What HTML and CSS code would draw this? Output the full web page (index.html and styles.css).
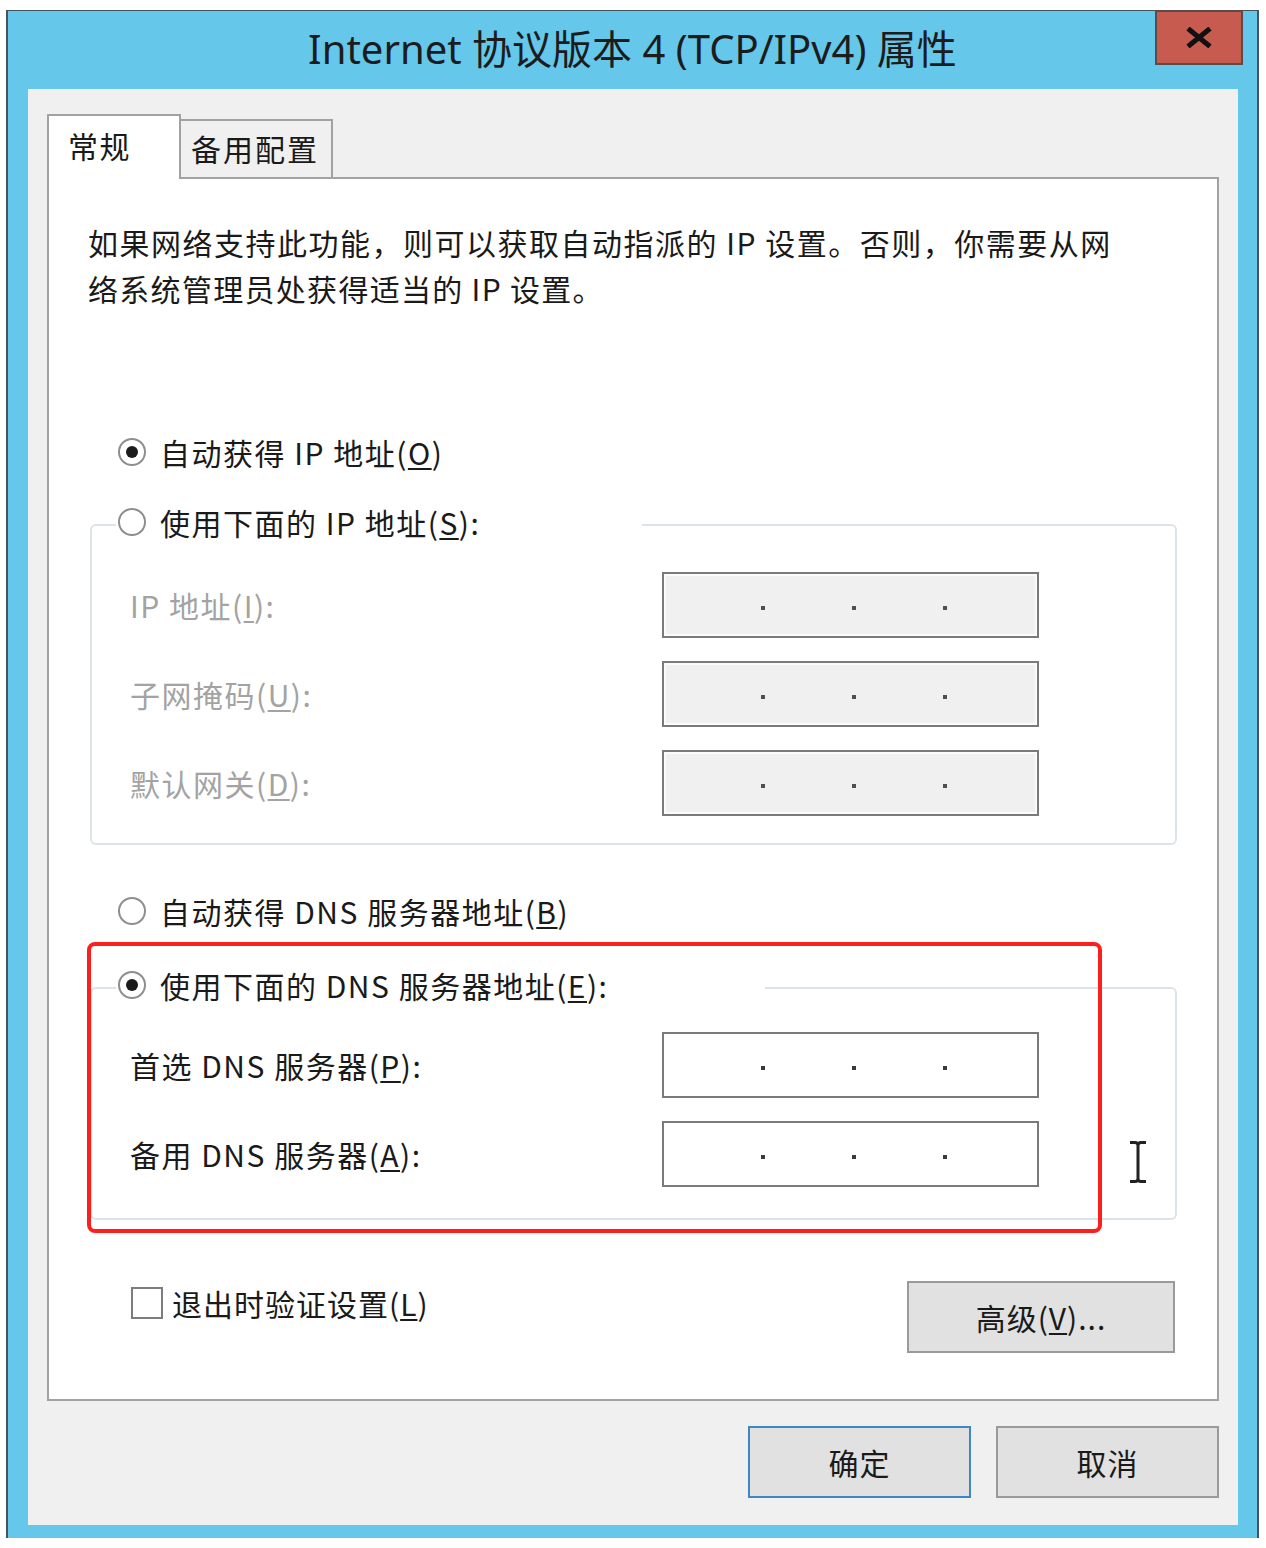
FILE: index.html
```html
<!DOCTYPE html>
<html lang="zh-CN">
<head>
<meta charset="utf-8">
<title>Internet 协议版本 4 (TCP/IPv4) 属性</title>
<link rel="stylesheet" href="styles.css">
</head>
<body>
<div class="window">
  <div class="titlebar">
    <div class="title">Internet 协议版本 4 (TCP/IPv4) 属性</div>
    <button class="close" aria-label="关闭">
      <svg width="26" height="21" viewBox="0 0 26 21"><path d="M2 1.5 L24 19.5 M24 1.5 L2 19.5" stroke="#111" stroke-width="5" fill="none"/></svg>
    </button>
  </div>
  <div class="client">
    <div class="tabs">
      <div class="tab active">常规</div>
      <div class="tab inactive">备用配置</div>
    </div>
    <div class="panel">
      <p class="intro"><span class="l1">如果网络支持此功能，则可以获取自动指派的 IP 设置。否则，你需要从网</span><br><span class="l2">络系统管理员处获得适当的 IP 设置。</span></p>

      <div class="radio-row r1"><span class="radio on"></span>自动获得 IP 地址(<u>O</u>)</div>

      <div class="group g1">
        <div class="group-head">
          <span class="seg-l"></span>
          <div class="head-label"><span class="radio"></span>使用下面的 IP 地址(<u>S</u>):</div>
          <span class="seg-r"></span>
        </div>
        <div class="group-body">
          <div class="field disabled"><span class="label">IP 地址(<u>I</u>):</span><span class="ipbox gray"><i></i><i></i><i></i></span></div>
          <div class="field disabled"><span class="label">子网掩码(<u>U</u>):</span><span class="ipbox gray"><i></i><i></i><i></i></span></div>
          <div class="field disabled"><span class="label">默认网关(<u>D</u>):</span><span class="ipbox gray"><i></i><i></i><i></i></span></div>
        </div>
      </div>

      <div class="radio-row r3"><span class="radio"></span>自动获得 DNS 服务器地址(<u>B</u>)</div>

      <div class="group g2">
        <div class="group-head">
          <span class="seg-l"></span>
          <div class="head-label"><span class="radio on"></span>使用下面的 DNS 服务器地址(<u>E</u>):</div>
          <span class="seg-r"></span>
        </div>
        <div class="group-body">
          <div class="field"><span class="label">首选 DNS 服务器(<u>P</u>):</span><span class="ipbox"><i></i><i></i><i></i></span></div>
          <div class="field"><span class="label">备用 DNS 服务器(<u>A</u>):</span><span class="ipbox"><i></i><i></i><i></i></span></div>
        </div>
      </div>

      <div class="bottom-row">
        <div class="check"><span class="box"></span>退出时验证设置(<u>L</u>)</div>
        <button class="btn adv">高级(<u>V</u>)...</button>
      </div>

      <div class="annotation"></div>
      <svg class="ibeam" width="18" height="44" viewBox="0 0 18 44"><path d="M1 2.5 H6 Q9 2.5 9 5.5 V38.5 Q9 41.5 6 41.5 H1 M17 2.5 H12 Q9 2.5 9 5.5 M17 41.5 H12 Q9 41.5 9 38.5" stroke="#222" stroke-width="3" fill="none"/></svg>
    </div>
    <div class="actions">
      <button class="btn ok">确定</button>
      <button class="btn">取消</button>
    </div>
  </div>
</div>
</body>
</html>
```

FILE: styles.css
```css
html, body {
  margin: 0;
  padding: 0;
  background: #ffffff;
}
body {
  font-family: "Noto Sans CJK SC", "Noto Sans", sans-serif;
  color: #1a1a1a;
}
button {
  font-family: inherit;
  color: inherit;
  cursor: default;
}
u {
  text-decoration-thickness: 2px;
  text-underline-offset: 3px;
}

.window {
  margin: 10px 0 0 6px;
  width: 1253px;
  height: 1528px;
  box-sizing: border-box;
  background: #65c8ea;
  border: 2px solid #46535c;
  border-top-width: 1px;
  border-bottom: none;
  display: flex;
  flex-direction: column;
}

.titlebar {
  height: 78px;
  flex: none;
  display: grid;
  grid-template-columns: 1fr auto 1fr;
}
.title {
  grid-column: 2;
  font-family: "Noto Sans", "Noto Sans CJK SC", sans-serif;
  font-size: 40px;
  line-height: 76px;
  color: #1c1c1c;
  white-space: nowrap;
}
.close {
  grid-column: 3;
  justify-self: end;
  align-self: start;
  margin: -1px 14px 0 0;
  width: 88px;
  height: 55px;
  box-sizing: border-box;
  padding: 0;
  background: #c75b4f;
  border: 2px solid #5c4a47;
  display: flex;
  align-items: center;
  justify-content: center;
}

.client {
  margin: 0 19px 13px 20px;
  background: #f0f0f0;
  padding: 25px 19px 27px 19px;
  flex: 1;
  display: flex;
  flex-direction: column;
}

.tabs {
  display: flex;
  align-items: flex-end;
  height: 63px;
}
.tab {
  font-size: 30px;
  line-height: 44px;
  box-sizing: border-box;
  border: 2px solid #a2a2a2;
  border-bottom: none;
  white-space: nowrap;
  letter-spacing: 1.5px;
}
.tab.active {
  position: relative;
  z-index: 2;
  width: 134px;
  height: 65px;
  margin-bottom: -2px;
  background: #ffffff;
  padding: 7px 0 0 19px;
}
.tab.inactive {
  width: 152px;
  height: 58px;
  border-left: none;
  background: #f0f0f0;
  padding: 5px 0 0 10px;
  letter-spacing: 2px;
}

.panel {
  position: relative;
  background: #ffffff;
  border: 2px solid #a2a2a2;
  padding: 40px 39px 46px 39px;
  font-size: 30px;
  letter-spacing: 1.5px;
}

.intro {
  margin: 0;
  line-height: 46px;
  white-space: nowrap;
}
.intro .l1 {
  letter-spacing: 1.5px;
}
.intro .l2 {
  letter-spacing: 1.3px;
}

.radio-row {
  display: flex;
  align-items: center;
  height: 44px;
  line-height: 44px;
  margin-left: 30px;
  white-space: nowrap;
}
.r1 { margin-top: 119px; }
.r3 { margin-top: 44px; }

.radio {
  flex: none;
  width: 28px;
  height: 28px;
  box-sizing: border-box;
  border-radius: 50%;
  border: 2px solid #8e8e8e;
  background: #ffffff;
  margin-right: 14px;
  display: flex;
  align-items: center;
  justify-content: center;
}
.radio.on::after {
  content: "";
  width: 12px;
  height: 12px;
  border-radius: 50%;
  background: #1b1b1b;
}

.group {
  margin: 0 1px 0 2px;
}
.g1 { margin-top: 26px; }
.g2 { margin-top: 30px; }

.group-head {
  display: flex;
  height: 44px;
}
.seg-l, .seg-r {
  align-self: flex-end;
  height: 20px;
  box-sizing: border-box;
  border-top: 2px solid #dce4ea;
}
.seg-l {
  width: 26px;
  border-left: 2px solid #dce4ea;
  border-top-left-radius: 6px;
}
.seg-r {
  flex: 1;
  border-right: 2px solid #dce4ea;
  border-top-right-radius: 6px;
}
.head-label {
  display: flex;
  align-items: center;
  line-height: 44px;
  padding-left: 2px;
  white-space: nowrap;
}
.g1 .head-label { width: 524px; }
.g2 .head-label { width: 647px; }

.group-body {
  border: 2px solid #dce4ea;
  border-top: none;
  border-radius: 0 0 6px 6px;
  display: flex;
  flex-direction: column;
  gap: 23px;
  padding-left: 38px;
}
.g1 .group-body { padding-top: 28px; padding-bottom: 27px; }
.g2 .group-body { padding-top: 25px; padding-bottom: 31px; }

.field {
  display: grid;
  grid-template-columns: 532px 377px;
  align-items: center;
  height: 66px;
}
.field .label {
  line-height: 44px;
  white-space: nowrap;
}
.field.disabled .label {
  color: #a3a3a3;
}

.ipbox {
  height: 66px;
  box-sizing: border-box;
  border: 2px solid #7a7a7a;
  background: #ffffff;
  display: flex;
  align-items: center;
  padding: 6px 0 0 97px;
  gap: 87px;
}
.ipbox.gray {
  background: #f0f0f0;
  box-shadow: inset 0 0 0 2px #fbfbfb;
}
.ipbox i {
  display: block;
  width: 4px;
  height: 4px;
  background: #3a3a3a;
}
.ipbox.gray i {
  background: #4f4f4f;
}

.bottom-row {
  margin-top: 61px;
  display: flex;
  justify-content: space-between;
  align-items: flex-start;
  padding-right: 3px;
}
.check {
  display: flex;
  align-items: center;
  height: 44px;
  line-height: 44px;
  margin-left: 43px;
  white-space: nowrap;
  letter-spacing: 1px;
}
.check .box {
  width: 32px;
  height: 32px;
  box-sizing: border-box;
  border: 2px solid #7d7d7d;
  background: #ffffff;
  margin-right: 9px;
}

.btn {
  height: 72px;
  box-sizing: border-box;
  background: #e1e1e1;
  border: 2px solid #9a9a9a;
  font-size: 30px;
  letter-spacing: 1px;
  padding: 0;
}
.btn.adv { width: 268px; }
.btn.ok { border-color: #3f86c4; }

.actions {
  margin-top: 25px;
  display: flex;
  justify-content: flex-end;
  gap: 25px;
}
.actions .btn { width: 223px; }

.annotation {
  position: absolute;
  left: 38px;
  top: 763px;
  width: 1015px;
  height: 291px;
  box-sizing: border-box;
  border: 4px solid #ff1e1e;
  border-radius: 8px;
}
.ibeam {
  position: absolute;
  left: 1080px;
  top: 961px;
}
```
